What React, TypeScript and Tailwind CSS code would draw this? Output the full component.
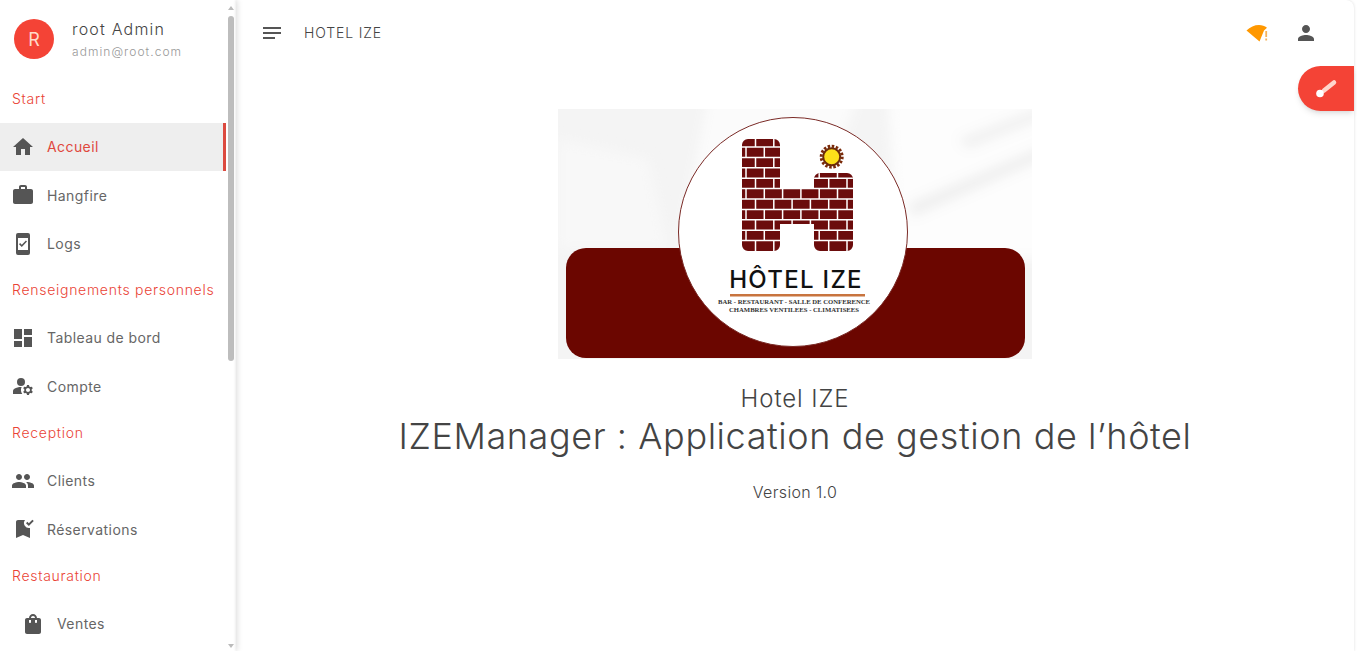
import { MdHome, MdWork, MdDashboard, MdManageAccounts, MdPeople, MdBookmarkAdded, MdShoppingBag, MdPerson, MdNotes } from "react-icons/md"
import type { ReactNode } from "react"

const font = "font-['Inter','Liberation_Sans',sans-serif]"

// phone shaped icon used for the Logs entry
const LogsIcon = () => (
  <svg viewBox="0 0 24 24" className="h-6 w-6" fill="#555">
    <path d="M7 1h10a2 2 0 0 1 2 2v18a2 2 0 0 1-2 2H7a2 2 0 0 1-2-2V3a2 2 0 0 1 2-2zm0 5v12h10V6H7z" />
    <path d="M16 9.500l-5.200 5.500L8 12.200l1.100-1.100 1.700 1.700 4.100-4.400z" />
  </svg>
)

const NavItem = ({ icon, label, active, sub, short }: { icon: ReactNode; label: string; active?: boolean; sub?: boolean; short?: boolean }) => (
  <div className={`flex items-center ${short ? "h-12" : "h-[48.5px]"} ${sub ? "pl-[21px]" : "pl-[11px]"} ${active ? "border-r-[3px] border-[#dc4a3f] bg-[#eeeeee]" : ""}`}>
    <span className="flex w-6 justify-center text-[24px] text-[#555555]">{icon}</span>
    <span className={`ml-3 text-[14px] tracking-[0.42px] ${active ? "text-[#e0483d]" : "text-[#666666]"}`}>{label}</span>
  </div>
)

const Section = ({ label, first }: { label: string; first?: boolean }) => (
  <div className={`flex items-center pb-[2px] pl-3 text-[14px] font-light tracking-[0.72px] text-[#ea4335] ${first ? "h-[46.5px]" : "h-[46px]"}`}>{label}</div>
)

const H_PATH = "M190 30h26a6 6 0 0 1 6 6v43h34V70a6 6 0 0 1 6-6h27a6 6 0 0 1 6 6v66a6 6 0 0 1-6 6h-27a6 6 0 0 1-6-6v-21h-34v21a6 6 0 0 1-6 6h-26a6 6 0 0 1-6-6V36a6 6 0 0 1 6-6z"

const rowLines = Array.from({ length: 10 }, (_, i) => 38 + i * 10.4)
const joints = Array.from({ length: 7 }, (_, i) => i)

const Logo = () => (
  <div className="relative h-[250px] w-[474px] overflow-hidden bg-[#f4f4f4]">
    <svg viewBox="0 0 474 250" className="absolute inset-0 h-full w-full">
      <defs>
        <filter id="silk" x="-20%" y="-20%" width="140%" height="140%">
          <feGaussianBlur stdDeviation="6" />
        </filter>
        <clipPath id="brick-h">
          <path d={H_PATH} />
        </clipPath>
      </defs>
      {/* silky background */}
      <g filter="url(#silk)">
        <path d="M150 -10 L300 -10 L240 140 L120 140 Z" fill="#fbfbfb" />
        <path d="M330 -10 L490 -10 L490 150 L340 150 Z" fill="#fdfdfd" />
        <path d="M350 95 L490 35 L490 48 L355 108 Z" fill="#efefef" />
        <path d="M400 30 L490 -5 L490 8 L410 40 Z" fill="#f1f1f1" />
        <path d="M0 30 L90 50 L110 140 L0 140 Z" fill="#f8f8f8" />
      </g>
      <rect x="8" y="139" width="459" height="110" rx="20" fill="#6b0600" />
      <circle cx="235" cy="123" r="114.500" fill="#ffffff" stroke="#7a2a26" strokeWidth="1" />
      {/* brick H */}
      <path d={H_PATH} fill="#6b0c0c" />
      <g stroke="#ffffff" strokeWidth="1.500" clipPath="url(#brick-h)">
        {rowLines.map((y) => (
          <line key={y} x1="184" x2="295" y1={y} y2={y} />
        ))}
        {rowLines.map((y, row) =>
          joints.map((j) => {
            const x = (row % 2 === 0 ? 188 : 197.5) + j * 18.3
            return <line key={`${row}-${j}`} x1={x} x2={x} y1={y} y2={y + 10.4} />
          })
        )}
        {joints.map((j) => {
          const x = 197.5 + j * 18.3
          return <line key={j} x1={x} x2={x} y1={30} y2={38} />
        })}
      </g>
      {/* sun */}
      <circle cx="273.700" cy="47.700" r="10.500" fill="none" stroke="#7a2a0a" strokeWidth="3" strokeDasharray="2.500 1.600" />
      <circle cx="273.700" cy="47.700" r="8.500" fill="#fde01a" stroke="#6b2a0a" strokeWidth="2" />
      <text x="238" y="178.500" textAnchor="middle" fontFamily="Inter, sans-serif" fontWeight="500" fontSize="24" letterSpacing="1.300" fill="#111111">HÔTEL IZE</text>
      <rect x="172" y="185" width="135" height="2.500" fill="#c8743f" />
      <text x="236" y="195" textAnchor="middle" fontFamily="Liberation Serif, serif" fontWeight="700" fontSize="6.700" fill="#333333">BAR - RESTAURANT - SALLE DE CONFERENCE</text>
      <text x="236" y="203" textAnchor="middle" fontFamily="Liberation Serif, serif" fontWeight="700" fontSize="6.700" fill="#333333">CHAMBRES VENTILEES - CLIMATISEES</text>
    </svg>
  </div>
)

export default function App() {
  return (
    <div className={`${font} flex h-[651px] w-[1357px] overflow-hidden bg-white`}>
      {/* Sidebar */}
      <aside className="flex h-full w-[236px] shrink-0 bg-white shadow-[1px_0_6px_rgba(0,0,0,0.15)]">
        <div className="w-[226px] shrink-0 overflow-hidden">
          <div className="flex h-[76px] items-start pl-[14px] pt-[19px]">
            <div className="flex h-10 w-10 items-center justify-center rounded-full bg-[#f44336] text-[18px] text-[#ffd9c9]">R</div>
            <div className="ml-[18px]">
              <div className="text-[16px] font-light leading-5 tracking-[1.2px] text-[#444444]">root Admin</div>
              <div className="mt-[5px] text-[12px] font-light leading-4 tracking-[1.05px] text-[#999999]">admin@root.com</div>
            </div>
          </div>
          <Section label="Start" first />
          <NavItem icon={<MdHome />} label="Accueil" active />
          <NavItem icon={<MdWork />} label="Hangfire" />
          <NavItem icon={<LogsIcon />} label="Logs" short />
          <Section label="Renseignements personnels" />
          <NavItem icon={<MdDashboard />} label="Tableau de bord" />
          <NavItem icon={<MdManageAccounts />} label="Compte" />
          <Section label="Reception" />
          <NavItem icon={<MdPeople />} label="Clients" />
          <NavItem icon={<MdBookmarkAdded />} label="Réservations" />
          <Section label="Restauration" />
          <NavItem icon={<MdShoppingBag />} label="Ventes" sub />
        </div>
        {/* scrollbar */}
        <div className="flex w-[10px] flex-col items-center pt-[6px]">
          <div className="h-0 w-0 border-x-[3px] border-b-[4px] border-x-transparent border-b-[#bbbbbb]" />
          <div className="mt-[6px] h-[345px] w-[6px] rounded-full bg-[#bdbdbd]" />
          <div className="mt-auto mb-[3px] h-0 w-0 border-x-[3px] border-t-[4px] border-x-transparent border-t-[#bbbbbb]" />
        </div>
      </aside>

      {/* Main */}
      <main className="relative mr-[3px] flex min-w-0 flex-1 flex-col rounded-tr-[8px] shadow-[0_0_3px_rgba(0,0,0,0.14)]">
        <header className="flex h-[65px] items-center pl-6 pr-[36px]">
          <MdNotes className="text-[24px] text-[#555555]" />
          <span className="ml-[20px] text-[14px] font-light tracking-[0.85px] text-[#444444]">HOTEL IZE</span>
          <div className="ml-auto flex items-center gap-6">
            <svg viewBox="0 0 24 24" className="h-6 w-6">
              <path d="M0.500 9.500C4 6 8.500 4 13 4c3 0 5.700.9 8 2.700L18 9.500 13.500 20.500z" fill="#ff9800" />
              <path d="M19.300 10h1.800v6h-1.800zM19.300 17.500h1.800v2h-1.800z" fill="#f5b35c" />
            </svg>
            <MdPerson className="text-[24px] text-[#555555]" />
          </div>
        </header>

        <div className="absolute right-0 top-[66px] flex h-[45px] w-[56px] items-center rounded-l-full bg-[#f44336] pl-4 shadow-md">
          <svg viewBox="0 0 24 24" className="h-6 w-6">
            <path d="M10 13.500L20 5.500" stroke="#ffd5cc" strokeWidth="4.500" strokeLinecap="round" />
            <circle cx="6" cy="16.500" r="3.800" fill="#ffffff" />
          </svg>
        </div>

        <div className="flex flex-col items-center pt-[44px] text-[#444444]">
          <Logo />
          <div className="mt-[24px] text-[24px] font-light leading-8 tracking-[0.9px]">Hotel IZE</div>
          <div className="mt-0 text-[36px] font-light leading-[42px] tracking-[0.58px]">IZEManager : Application de gestion de l’hôtel</div>
          <div className="mt-[23px] text-[16px] font-light leading-6 tracking-[0.35px]">Version 1.0</div>
        </div>
      </main>
    </div>
  )
}
